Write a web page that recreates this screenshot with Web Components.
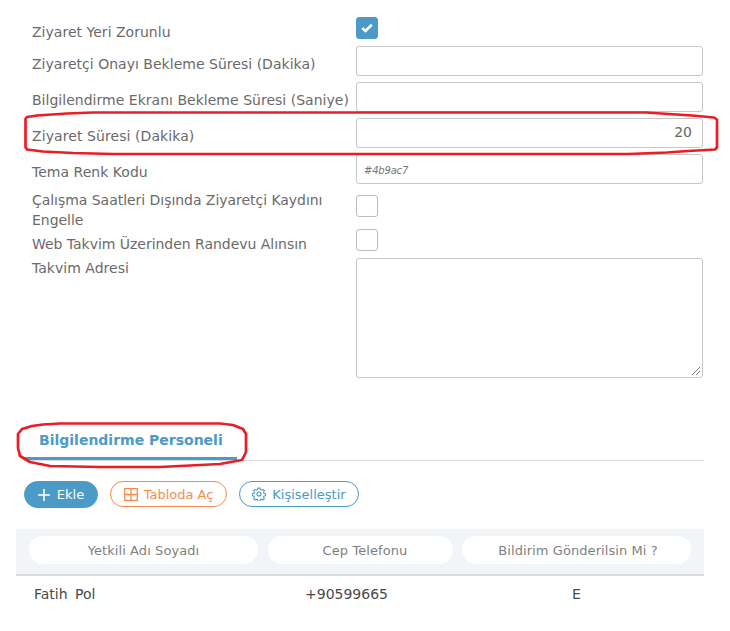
<!DOCTYPE html>
<html lang="tr"><head><meta charset="utf-8"><title>Form</title>
<style>
html,body{margin:0;padding:0;background:#fff}
body{font-family:"DejaVu Sans",Verdana,sans-serif;font-size:14px;color:#666}
</style></head><body>
<settings-page></settings-page>
<template id="tpl-row"><style>
:host{display:grid;grid-template-columns:324px 347px;align-items:start;padding-left:32px}
.l{font-size:14px;line-height:24px;color:#6a6a6a;letter-spacing:.02px}
.c{display:flex}
</style><div class="l"><slot name="label"></slot></div><div class="c"><slot></slot></div></template>
<template id="tpl-input"><style>
:host{display:flex;box-sizing:border-box;width:347px;height:30px;border:1px solid #c6c6c6;border-radius:3px;background:#fff;align-items:center;padding:0 10px 0 7px;color:#666;font-size:14px;overflow:hidden}
:host([align=right]){justify-content:flex-end;padding-bottom:2px}
:host([hint]){font-size:10px;font-style:italic;color:#777;padding-top:3px;letter-spacing:-.2px}
:host([multiline]){height:120px;position:relative}
</style><slot></slot></template>
<template id="tpl-check"><style>
:host{display:flex;box-sizing:border-box;width:22px;height:22px;border:1px solid #bdbdbd;border-radius:3px;background:#fff;align-items:center;justify-content:center}
:host([checked]){background:#4b9ac7;border-color:#4b9ac7}
svg{display:none}
:host([checked]) svg{display:block}
</style><svg width="12" height="10" viewBox="0 0 12 10"><path d="M1.200 5 4.500 8 10.800 1.800" fill="none" stroke="#fff" stroke-width="2.600"/></svg></template>
<template id="tpl-btn"><style>
:host{display:inline-flex;box-sizing:border-box;height:26px;border:1px solid var(--c);border-radius:13px;align-items:center;justify-content:center;gap:6px;color:var(--c);font-size:13px;background:#fff;white-space:nowrap}
:host([solid]){background:var(--c);color:#fff;height:27px;border-radius:14px;gap:7px}
::slotted(svg){display:block;flex:none}
</style><slot></slot></template>
<template id="tpl-head"><style>
:host{display:flex;box-sizing:border-box;height:28px;background:#fff;border-radius:14px;align-items:center;justify-content:center;font-size:13px;letter-spacing:.08px;color:#7f7f7f;white-space:nowrap}
</style><slot></slot></template>
<template id="tpl-page"><style>
:host{display:block;width:730px;height:631px;position:relative;overflow:hidden}
.form{display:flex;flex-direction:column;padding-top:17px}
.tabs{margin:36px 26px 0 24px;height:46px;border-bottom:1px solid #dcdcdc;display:flex}
.tab{box-sizing:border-box;width:213px;height:46px;border-bottom:3px solid #4b9ac7;padding-left:15px;padding-top:16px;font-size:14px;font-weight:700;color:#4b9ac7;line-height:20px}
.bar{display:flex;gap:12px;margin:20px 0 0 24px;align-items:flex-start}
.table{margin:21px 26px 0 16px}
.thead{box-sizing:border-box;height:47px;background:#f1f5f8;border-bottom:2px solid #dcdcdc;padding:7px 13px 0;display:grid;grid-template-columns:229px 185px 229px;column-gap:9.500px}
.tr{display:grid;grid-template-columns:271px 267px 1fr;padding:8px 0 0 18px;font-size:14px;line-height:20px;color:#4a4a4a;word-spacing:3px}
.ink{position:absolute;left:0;top:0;pointer-events:none}
</style>
<div class="form">
<form-row style="height:29px"><span slot="label" style="position:relative;top:3px">Ziyaret Yeri Zorunlu</span><form-check checked></form-check></form-row>
<form-row style="height:36px"><span slot="label" style="position:relative;top:6px">Ziyaretçi Onayı Bekleme Süresi (Dakika)</span><form-input></form-input></form-row>
<form-row style="height:36px"><span slot="label" style="position:relative;top:6px">Bilgilendirme Ekranı Bekleme Süresi (Saniye)</span><form-input></form-input></form-row>
<form-row style="height:36px"><span slot="label" style="position:relative;top:6px;letter-spacing:.08px">Ziyaret Süresi (Dakika)</span><form-input align="right">20</form-input></form-row>
<form-row style="height:41px"><span slot="label" style="position:relative;top:6px">Tema Renk Kodu</span><form-input hint>#4b9ac7</form-input></form-row>
<form-row style="height:34px"><span slot="label" style="display:block;width:300px;line-height:20px;position:relative;top:-5px;letter-spacing:-.04px">Çalışma Saatleri Dışında Ziyaretçi Kaydını Engelle</span><form-check></form-check></form-row>
<form-row style="height:29px"><span slot="label" style="position:relative;top:3px;letter-spacing:-.03px">Web Takvim Üzerinden Randevu Alınsın</span><form-check></form-check></form-row>
<form-row style="height:120px"><span slot="label" style="position:relative;top:-2px">Takvim Adresi</span><form-input multiline><svg width="11" height="11" viewBox="0 0 11 11" style="position:absolute;right:1px;bottom:1px"><path d="M2 10 10 2M6 10 10 6" stroke="#777" stroke-width="1" fill="none"/></svg></form-input></form-row>
</div>
<div class="tabs"><div class="tab">Bilgilendirme Personeli</div></div>
<div class="bar">
<form-btn solid style="--c:#4b9ac7;width:74px"><svg width="12" height="12" viewBox="0 0 12 12"><path d="M6 0v12M0 6h12" stroke="#fff" stroke-width="1.600"/></svg>Ekle</form-btn>
<form-btn style="--c:#f58b4f;width:117px"><svg width="14" height="13" viewBox="0 0 14 13"><path d="M.7.7h12.600v11.600H.7zM7 .7v11.600M.7 6.500h12.600" fill="none" stroke="#f58b4f" stroke-width="1.300"/></svg>Tabloda Aç</form-btn>
<form-btn style="--c:#4b9ac7;width:120px"><svg width="14" height="14" viewBox="0 0 24 24" fill="none" stroke="#4b9ac7" stroke-width="2"><circle cx="12" cy="12" r="3.400"/><path d="M10 1.500h4l.6 3 2.300 1 2.600-1.700 2.800 2.800-1.700 2.600 1 2.300 2.900.6v3.800l-2.900.6-1 2.300 1.700 2.600-2.800 2.800-2.600-1.700-2.300 1-.6 3h-4l-.6-3-2.300-1-2.600 1.700-2.800-2.800 1.700-2.600-1-2.300-2.900-.6v-3.800l2.900-.6 1-2.300-1.700-2.600 2.800-2.800 2.600 1.700 2.300-1z" transform="translate(1.200 .6) scale(.9)"/></svg>Kişiselleştir</form-btn>
</div>
<div class="table">
<div class="thead"><form-head>Yetkili Adı Soyadı</form-head><form-head style="padding-left:10px">Cep Telefonu</form-head><form-head style="padding-left:3px">Bildirim Gönderilsin Mi ?</form-head></div>
<div class="tr"><div>Fatih Pol</div><div>+90599665</div><div>E</div></div>
</div>
<svg class="ink" width="730" height="631" viewBox="0 0 730 631" fill="none" stroke="#ed1c24" stroke-width="2.700" stroke-linejoin="round">
<path d="M93 112.500H646L692 115.500 714 117.500 717 119.500V147.500L715 149.500 688 151 667 152.500 628 154H113L73 153 43 151.500 27 149.500 25.500 147V119L27 117 37 115.500 67 113.500Z"/>
<path d="M43 424.500 60 423.500H220L233 425 243 429 246 434V452L242 460 220 464 160 467H100L50 466 30 462 20 456 18 448V434L22 429 32 426Z"/>
</svg>
</template>
<script>
function reg(name,tpl){customElements.define(name,class extends HTMLElement{constructor(){super();this.attachShadow({mode:"open"}).appendChild(document.getElementById(tpl).content.cloneNode(true));}});}
reg("form-row","tpl-row");reg("form-input","tpl-input");reg("form-check","tpl-check");reg("form-btn","tpl-btn");reg("form-head","tpl-head");reg("settings-page","tpl-page");
</script>
</body></html>
